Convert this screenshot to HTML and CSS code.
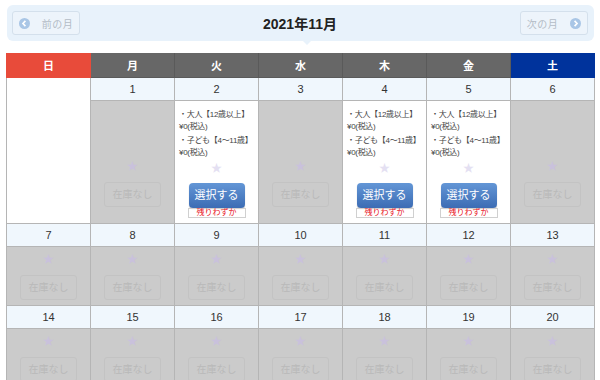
FILE: index.html
```html
<!DOCTYPE html>
<html lang="ja">
<head>
    <meta charset="UTF-8">
    <title>カレンダー</title>
    <link rel="stylesheet" href="styles.css">
</head>
<body>

<div class="month-nav">
    <a class="nav-btn prev">
        <svg class="nav-icon" viewBox="0 0 12 12"><circle cx="6" cy="6" r="6"/><path d="M7 3.2 4.3 6 7 8.8"/></svg>
        前の月
    </a>
    <h2>2021年11月</h2>
    <a class="nav-btn next">
        次の月
        <svg class="nav-icon" viewBox="0 0 12 12"><circle cx="6" cy="6" r="6"/><path d="M5 3.2 7.7 6 5 8.8"/></svg>
    </a>
</div>

<table class="calendar">
    <tr>
        <th class="sun">日</th>
        <th>月</th>
        <th>火</th>
        <th>水</th>
        <th>木</th>
        <th>金</th>
        <th class="sat">土</th>
    </tr>
    <tr class="days">
        <td class="empty" rowspan="2"></td>
        <td>1</td><td>2</td><td>3</td><td>4</td><td>5</td><td>6</td>
    </tr>
    <tr class="slots first">
        <td class="none"><div class="star">★</div><div class="sold">在庫なし</div></td>
        <td class="open">
            <div class="price">・大人【12歳以上】<br>¥0(税込)</div>
            <div class="price">・子ども【4～11歳】<br>¥0(税込)</div>
            <div class="star">★</div>
            <div class="select">選択する</div>
            <div class="few">残りわずか</div>
        </td>
        <td class="none"><div class="star">★</div><div class="sold">在庫なし</div></td>
        <td class="open">
            <div class="price">・大人【12歳以上】<br>¥0(税込)</div>
            <div class="price">・子ども【4～11歳】<br>¥0(税込)</div>
            <div class="star">★</div>
            <div class="select">選択する</div>
            <div class="few">残りわずか</div>
        </td>
        <td class="open">
            <div class="price">・大人【12歳以上】<br>¥0(税込)</div>
            <div class="price">・子ども【4～11歳】<br>¥0(税込)</div>
            <div class="star">★</div>
            <div class="select">選択する</div>
            <div class="few">残りわずか</div>
        </td>
        <td class="none"><div class="star">★</div><div class="sold">在庫なし</div></td>
    </tr>
    <tr class="days">
        <td>7</td><td>8</td><td>9</td><td>10</td><td>11</td><td>12</td><td>13</td>
    </tr>
    <tr class="slots">
        <td class="none"><div class="star">★</div><div class="sold">在庫なし</div></td>
        <td class="none"><div class="star">★</div><div class="sold">在庫なし</div></td>
        <td class="none"><div class="star">★</div><div class="sold">在庫なし</div></td>
        <td class="none"><div class="star">★</div><div class="sold">在庫なし</div></td>
        <td class="none"><div class="star">★</div><div class="sold">在庫なし</div></td>
        <td class="none"><div class="star">★</div><div class="sold">在庫なし</div></td>
        <td class="none"><div class="star">★</div><div class="sold">在庫なし</div></td>
    </tr>
    <tr class="days">
        <td>14</td><td>15</td><td>16</td><td>17</td><td>18</td><td>19</td><td>20</td>
    </tr>
    <tr class="slots">
        <td class="none"><div class="star">★</div><div class="sold">在庫なし</div></td>
        <td class="none"><div class="star">★</div><div class="sold">在庫なし</div></td>
        <td class="none"><div class="star">★</div><div class="sold">在庫なし</div></td>
        <td class="none"><div class="star">★</div><div class="sold">在庫なし</div></td>
        <td class="none"><div class="star">★</div><div class="sold">在庫なし</div></td>
        <td class="none"><div class="star">★</div><div class="sold">在庫なし</div></td>
        <td class="none"><div class="star">★</div><div class="sold">在庫なし</div></td>
    </tr>
</table>

</body>
</html>
```
FILE: styles.css
```css
body {
    margin: 0;
    padding: 5px 6px 0 6px;
    background-color: #ffffff;
    color: #333333;
    font-family: 'Liberation Sans', 'Noto Sans CJK JP', sans-serif;
    overflow: hidden;
}

.month-nav {
    position: relative;
    display: flex;
    justify-content: space-between;
    align-items: center;
    height: 36px;
    margin-left: 1px;
    width: 587px;
    padding: 0 6px 0 5px;
    box-sizing: border-box;
    background-color: #e8f2fb;
    border-radius: 6px;
}

.month-nav::after {
    content: "";
    position: absolute;
    left: 296px;
    bottom: -4px;
    border-left: 4px solid transparent;
    border-right: 4px solid transparent;
    border-top: 4px solid #e8f2fb;
}

.month-nav h2 {
    margin: 0;
    font-size: 14px;
    font-weight: bold;
    color: #222222;
}

.nav-btn {
    display: flex;
    align-items: center;
    justify-content: center;
    gap: 12px;
    width: 68px;
    height: 24px;
    box-sizing: border-box;
    border: 1px solid #d4e0ec;
    border-radius: 3px;
    background-color: #edf4fb;
    color: #b4bcc6;
    font-size: 10px;
    letter-spacing: 0.5px;
}

.nav-icon {
    width: 11px;
    height: 11px;
}

.nav-icon circle {
    fill: #a9c6e6;
}

.nav-icon path {
    fill: none;
    stroke: #ffffff;
    stroke-width: 1.8;
}

.calendar {
    margin-top: 12px;
    width: 589px;
    border-collapse: collapse;
    table-layout: fixed;
}

.calendar th {
    height: 24px;
    padding: 0;
    background-color: #676767;
    color: #ffffff;
    font-size: 11px;
    font-weight: bold;
    border: 1px solid #5a5a5a;
    border-top: none;
}

.calendar th.sun {
    background-color: #e84b3a;
    border-color: #e84b3a;
}

.calendar th.sat {
    background-color: #00339c;
    border-color: #00339c;
}

.calendar td {
    border: 1px solid #b5b5b5;
    padding: 0;
    text-align: center;
}

.days td {
    height: 22px;
    background-color: #f0f7fd;
    font-size: 11px;
    color: #333333;
}

.days td.empty {
    background-color: #ffffff;
}

.slots td {
    height: 51px;
    vertical-align: bottom;
    padding: 2px 0 5px 0;
}

.slots.first td {
    height: 106px;
}

.slots.first td.none {
    padding-bottom: 16px;
    height: 96px;
}

.slots td.none {
    background-color: #cbcbcb;
}

.slots td.open {
    background-color: #ffffff;
    text-align: left;
    padding: 8px 4px 5px 4px;
}

.price {
    font-size: 8px;
    line-height: 12px;
    color: #444444;
    margin-bottom: 2px;
    white-space: nowrap;
    letter-spacing: -0.3px;
}

.star {
    height: 18px;
    font-size: 11px;
    line-height: 18px;
    color: #c9c1dc;
    text-align: center;
}

.open .star {
    height: 14px;
    line-height: 14px;
    color: #e4e0f2;
}

.sold {
    width: 57px;
    height: 25px;
    margin: 7px auto 0 auto;
    box-sizing: border-box;
    border: 1px solid #c3c3c3;
    border-radius: 3px;
    font-size: 10px;
    line-height: 23px;
    color: #b9b9b9;
    text-align: center;
}

.select {
    width: 56px;
    height: 25px;
    margin: 8px auto 0 auto;
    border-radius: 4px;
    background: linear-gradient(#6396d6, #3c6cb4);
    box-shadow: 0 1px 1px rgba(0, 0, 0, 0.3);
    color: #ffffff;
    font-size: 11px;
    line-height: 25px;
    text-align: center;
}

.few {
    width: 58px;
    height: 10px;
    margin: 0 auto;
    box-sizing: border-box;
    border: 1px solid #d0d0d0;
    color: #e8101a;
    font-size: 8px;
    line-height: 8px;
    text-align: center;
}
```
